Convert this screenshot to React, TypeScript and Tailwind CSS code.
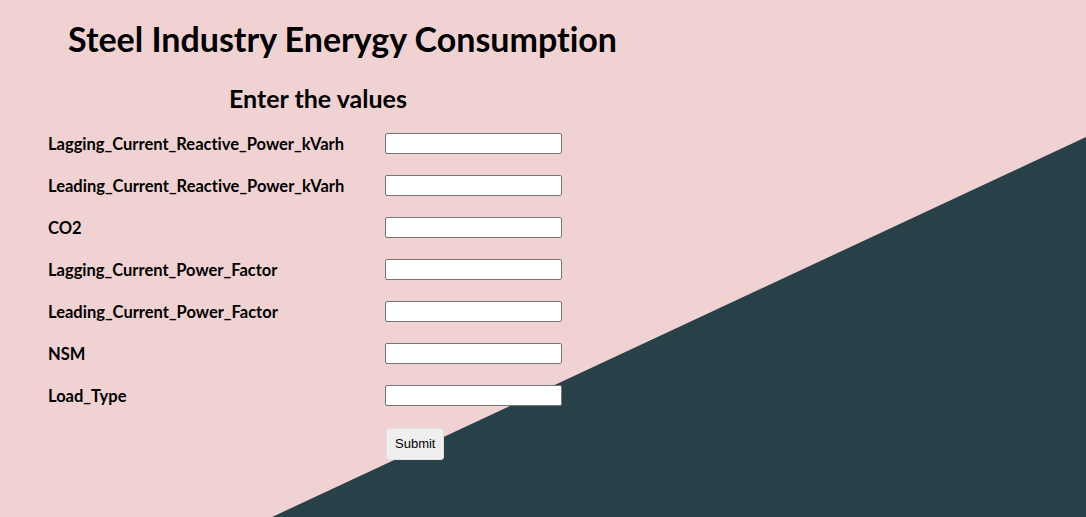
const fields = [
  "Lagging_Current_Reactive_Power_kVarh",
  "Leading_Current_Reactive_Power_kVarh",
  "CO2",
  "Lagging_Current_Power_Factor",
  "Leading_Current_Power_Factor",
  "NSM",
  "Load_Type",
];

export default function App() {
  return (
    <div className="relative w-full h-[517px] overflow-hidden bg-[#f0d2d3] font-['Lato','Open_Sans',sans-serif] [font-variant-ligatures:none] text-black">
      {/* diagonal backdrop */}
      <svg
        className="absolute inset-0 w-full h-full"
        viewBox="0 0 1086 517"
        preserveAspectRatio="none"
      >
        <polygon points="272,517 1086,137 1086,517" fill="#284149" />
      </svg>

      <div className="relative">
        <h1 className="pl-[68px] pt-[19px] text-[34px] leading-[40px] font-bold">
          Steel Industry Enerygy Consumption
        </h1>
        <h2 className="mt-[24px] pl-[229px] text-[25px] leading-[30px] font-bold">
          Enter the values
        </h2>

        <form className="mt-[9px] pl-[48px]">
          {fields.map((f) => (
            <div key={f} className="flex items-center h-[42px]">
              <label className="w-[337px] pt-[2px] text-[16.5px] font-bold">{f}</label>
              <input
                type="text"
                className="w-[177px] h-[21px] bg-white border border-[#767676] rounded-[2px]"
              />
            </div>
          ))}
          <div className="flex pl-[338px] pt-[12px]">
            <button
              type="button"
              className="h-[32px] px-[8px] bg-[#efefef] rounded-[3px] border border-[#e2e2e2] text-[13px] font-['Liberation_Sans',sans-serif]"
            >
              Submit
            </button>
          </div>
        </form>
      </div>
    </div>
  );
}
